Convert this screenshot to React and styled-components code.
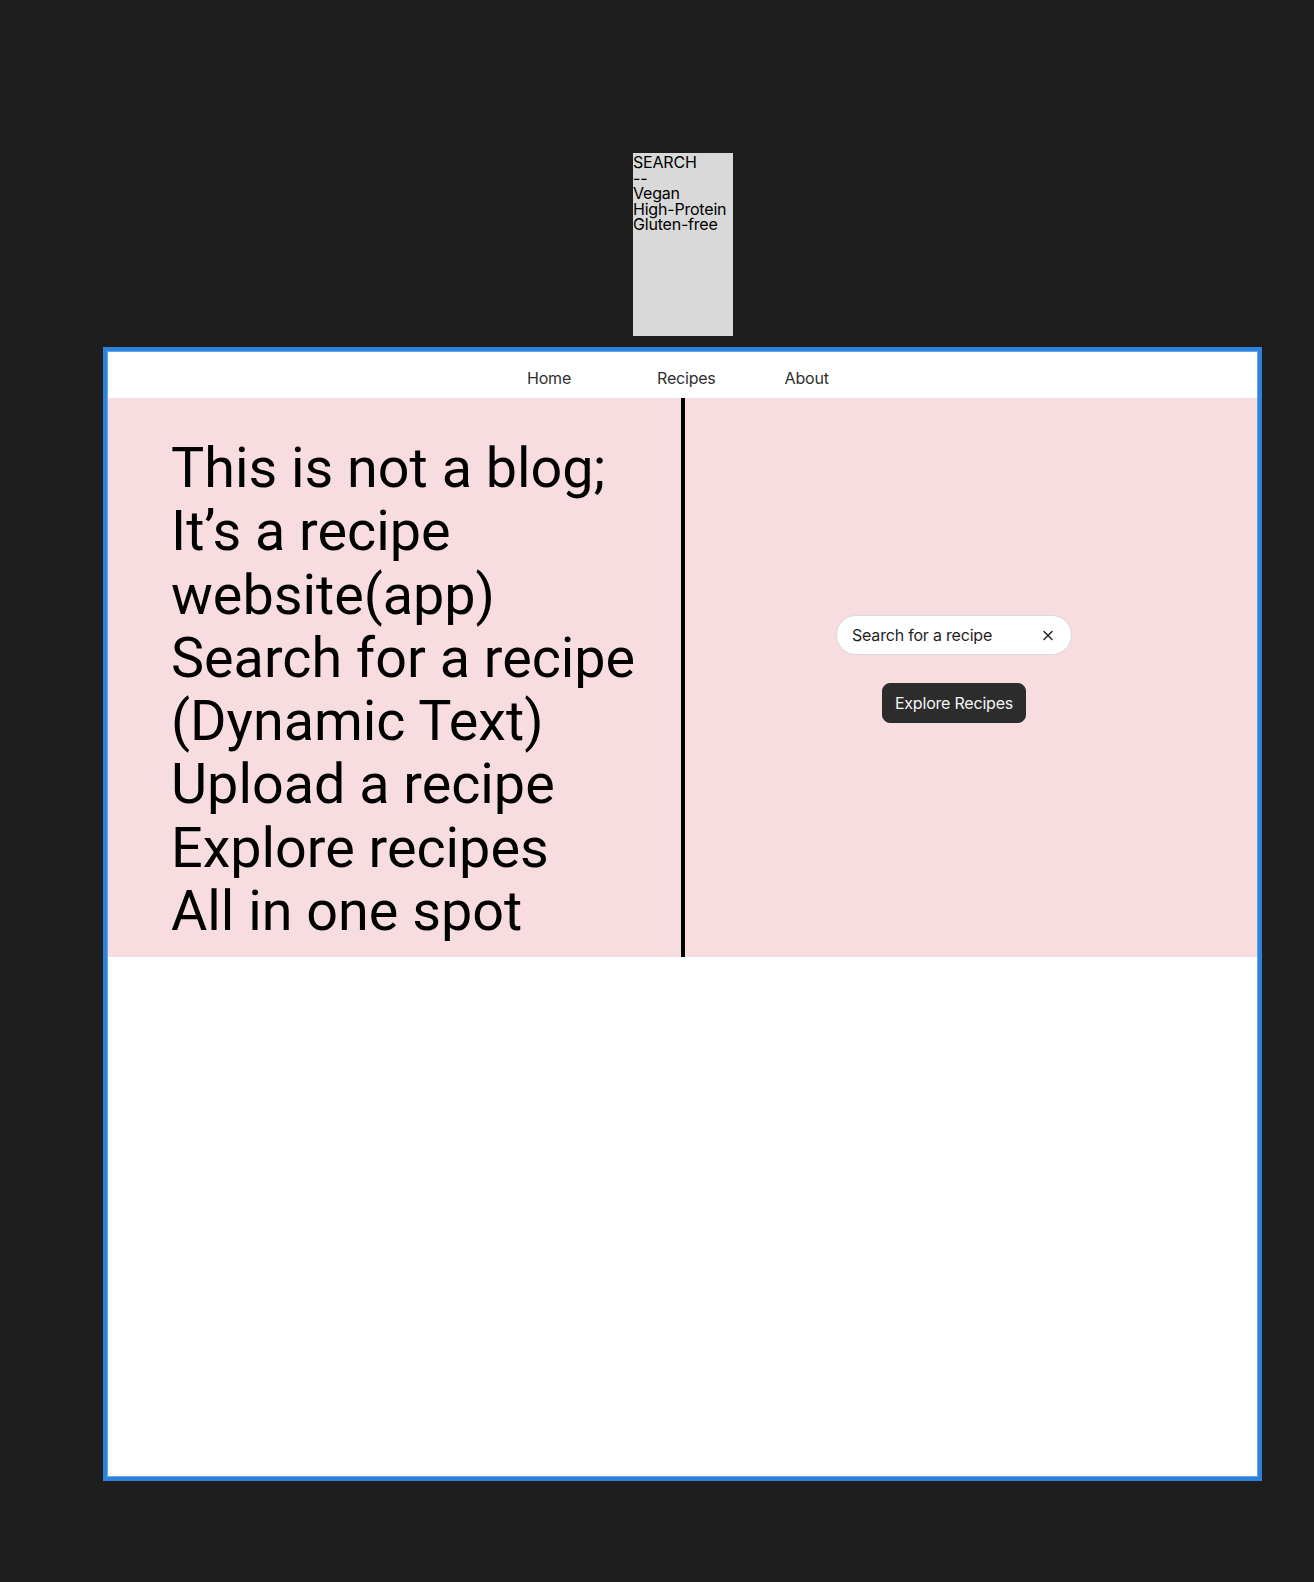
import React from "react";
import styled, { createGlobalStyle } from "styled-components";
import { X } from "lucide-react";

const Global = createGlobalStyle`
  html, body {
    margin: 0;
    padding: 0;
    background: #1e1e1e;
  }
  body {
    font-family: Inter, "Noto Sans", sans-serif;
  }
  * { box-sizing: border-box; }
`;

const Canvas = styled.div`
  min-height: 1582px;
  padding-top: 153px;
  display: flex;
  flex-direction: column;
  align-items: flex-start;
`;

const FilterPanel = styled.div`
  margin-left: 633px;
  width: 100px;
  height: 183px;
  padding-top: 2px;
  background: #d9d9d9;
  color: #000;
  font-family: Inter, sans-serif;
  font-size: 16px;
  letter-spacing: -0.2px;
  line-height: 15.6px;
`;

const FilterLine = styled.div``;

const Frame = styled.div`
  margin-top: 15px;
  margin-left: 107px;
  width: 1151px;
  height: 1126px;
  background: #ffffff;
  border: 1px solid #63a6ef;
  outline: 4px solid #2f82da;
  display: flex;
  flex-direction: column;
`;

const NavBar = styled.nav`
  height: 46px;
  background: #ffffff;
  display: flex;
  align-items: flex-start;
  padding-top: 17px;
  padding-left: 419px;
`;

const NavLink = styled.a`
  font-family: Inter, sans-serif;
  font-size: 16px;
  letter-spacing: -0.2px;
  line-height: 19px;
  color: #303030;
  text-decoration: none;
  margin-left: ${(p) => p.$offset || 0}px;
`;

const Hero = styled.section`
  height: 559px;
  background: #f8dde0;
  display: grid;
  grid-template-columns: 573px 4px 1fr;
`;

const Intro = styled.div`
  padding: 39px 0 0 63px;
`;

const IntroLine = styled.div`
  font-family: Roboto, "Liberation Sans", sans-serif;
  font-size: 55.7px;
  line-height: 63.25px;
  color: #000;
  white-space: nowrap;
`;

const Divider = styled.div`
  background: #000;
`;

const ActionPanel = styled.div`
  display: flex;
  flex-direction: column;
  align-items: center;
  justify-content: center;
  gap: 28px;
  padding-right: 34px;
  padding-bottom: 17px;
`;

const SearchField = styled.div`
  width: 236px;
  height: 40px;
  background: #ffffff;
  border: 1px solid #d9d9d9;
  border-radius: 9999px;
  display: flex;
  align-items: center;
  justify-content: space-between;
  padding: 0 15px 0 15px;
`;

const SearchText = styled.span`
  font-family: Inter, sans-serif;
  font-size: 16px;
  letter-spacing: -0.2px;
  line-height: 16px;
  color: #1e1e1e;
`;

const ClearButton = styled.span`
  display: flex;
  align-items: center;
  justify-content: center;
  width: 16px;
  height: 16px;
  color: #1e1e1e;
`;

const ExploreButton = styled.button`
  height: 40px;
  padding: 12px;
  border: 1px solid #2c2c2c;
  border-radius: 8px;
  background: #2c2c2c;
  color: #f5f5f5;
  font-family: Inter, sans-serif;
  font-size: 16px;
  letter-spacing: -0.2px;
  line-height: 16px;
  display: flex;
  align-items: center;
  justify-content: center;
  cursor: pointer;
`;

const introLines = [
  "This is not a blog;",
  "It\u2019s a recipe",
  "website(app)",
  "Search for a recipe",
  "(Dynamic Text)",
  "Upload a recipe",
  "Explore recipes",
  "All in one spot",
];

const filters = ["SEARCH", "--", "Vegan", "High-Protein", "Gluten-free"];

export default function App() {
  return (
    <>
      <Global />
      <Canvas>
        <FilterPanel>
          {filters.map((f) => (
            <FilterLine key={f}>{f}</FilterLine>
          ))}
        </FilterPanel>
        <Frame>
          <NavBar>
            <NavLink href="#">Home</NavLink>
            <NavLink href="#" $offset={86}>Recipes</NavLink>
            <NavLink href="#" $offset={69}>About</NavLink>
          </NavBar>
          <Hero>
            <Intro>
              {introLines.map((l) => (
                <IntroLine key={l}>{l}</IntroLine>
              ))}
            </Intro>
            <Divider />
            <ActionPanel>
              <SearchField>
                <SearchText>Search for a recipe</SearchText>
                <ClearButton>
                  <X size={17} strokeWidth={2} />
                </ClearButton>
              </SearchField>
              <ExploreButton>Explore Recipes</ExploreButton>
            </ActionPanel>
          </Hero>
        </Frame>
      </Canvas>
    </>
  );
}
